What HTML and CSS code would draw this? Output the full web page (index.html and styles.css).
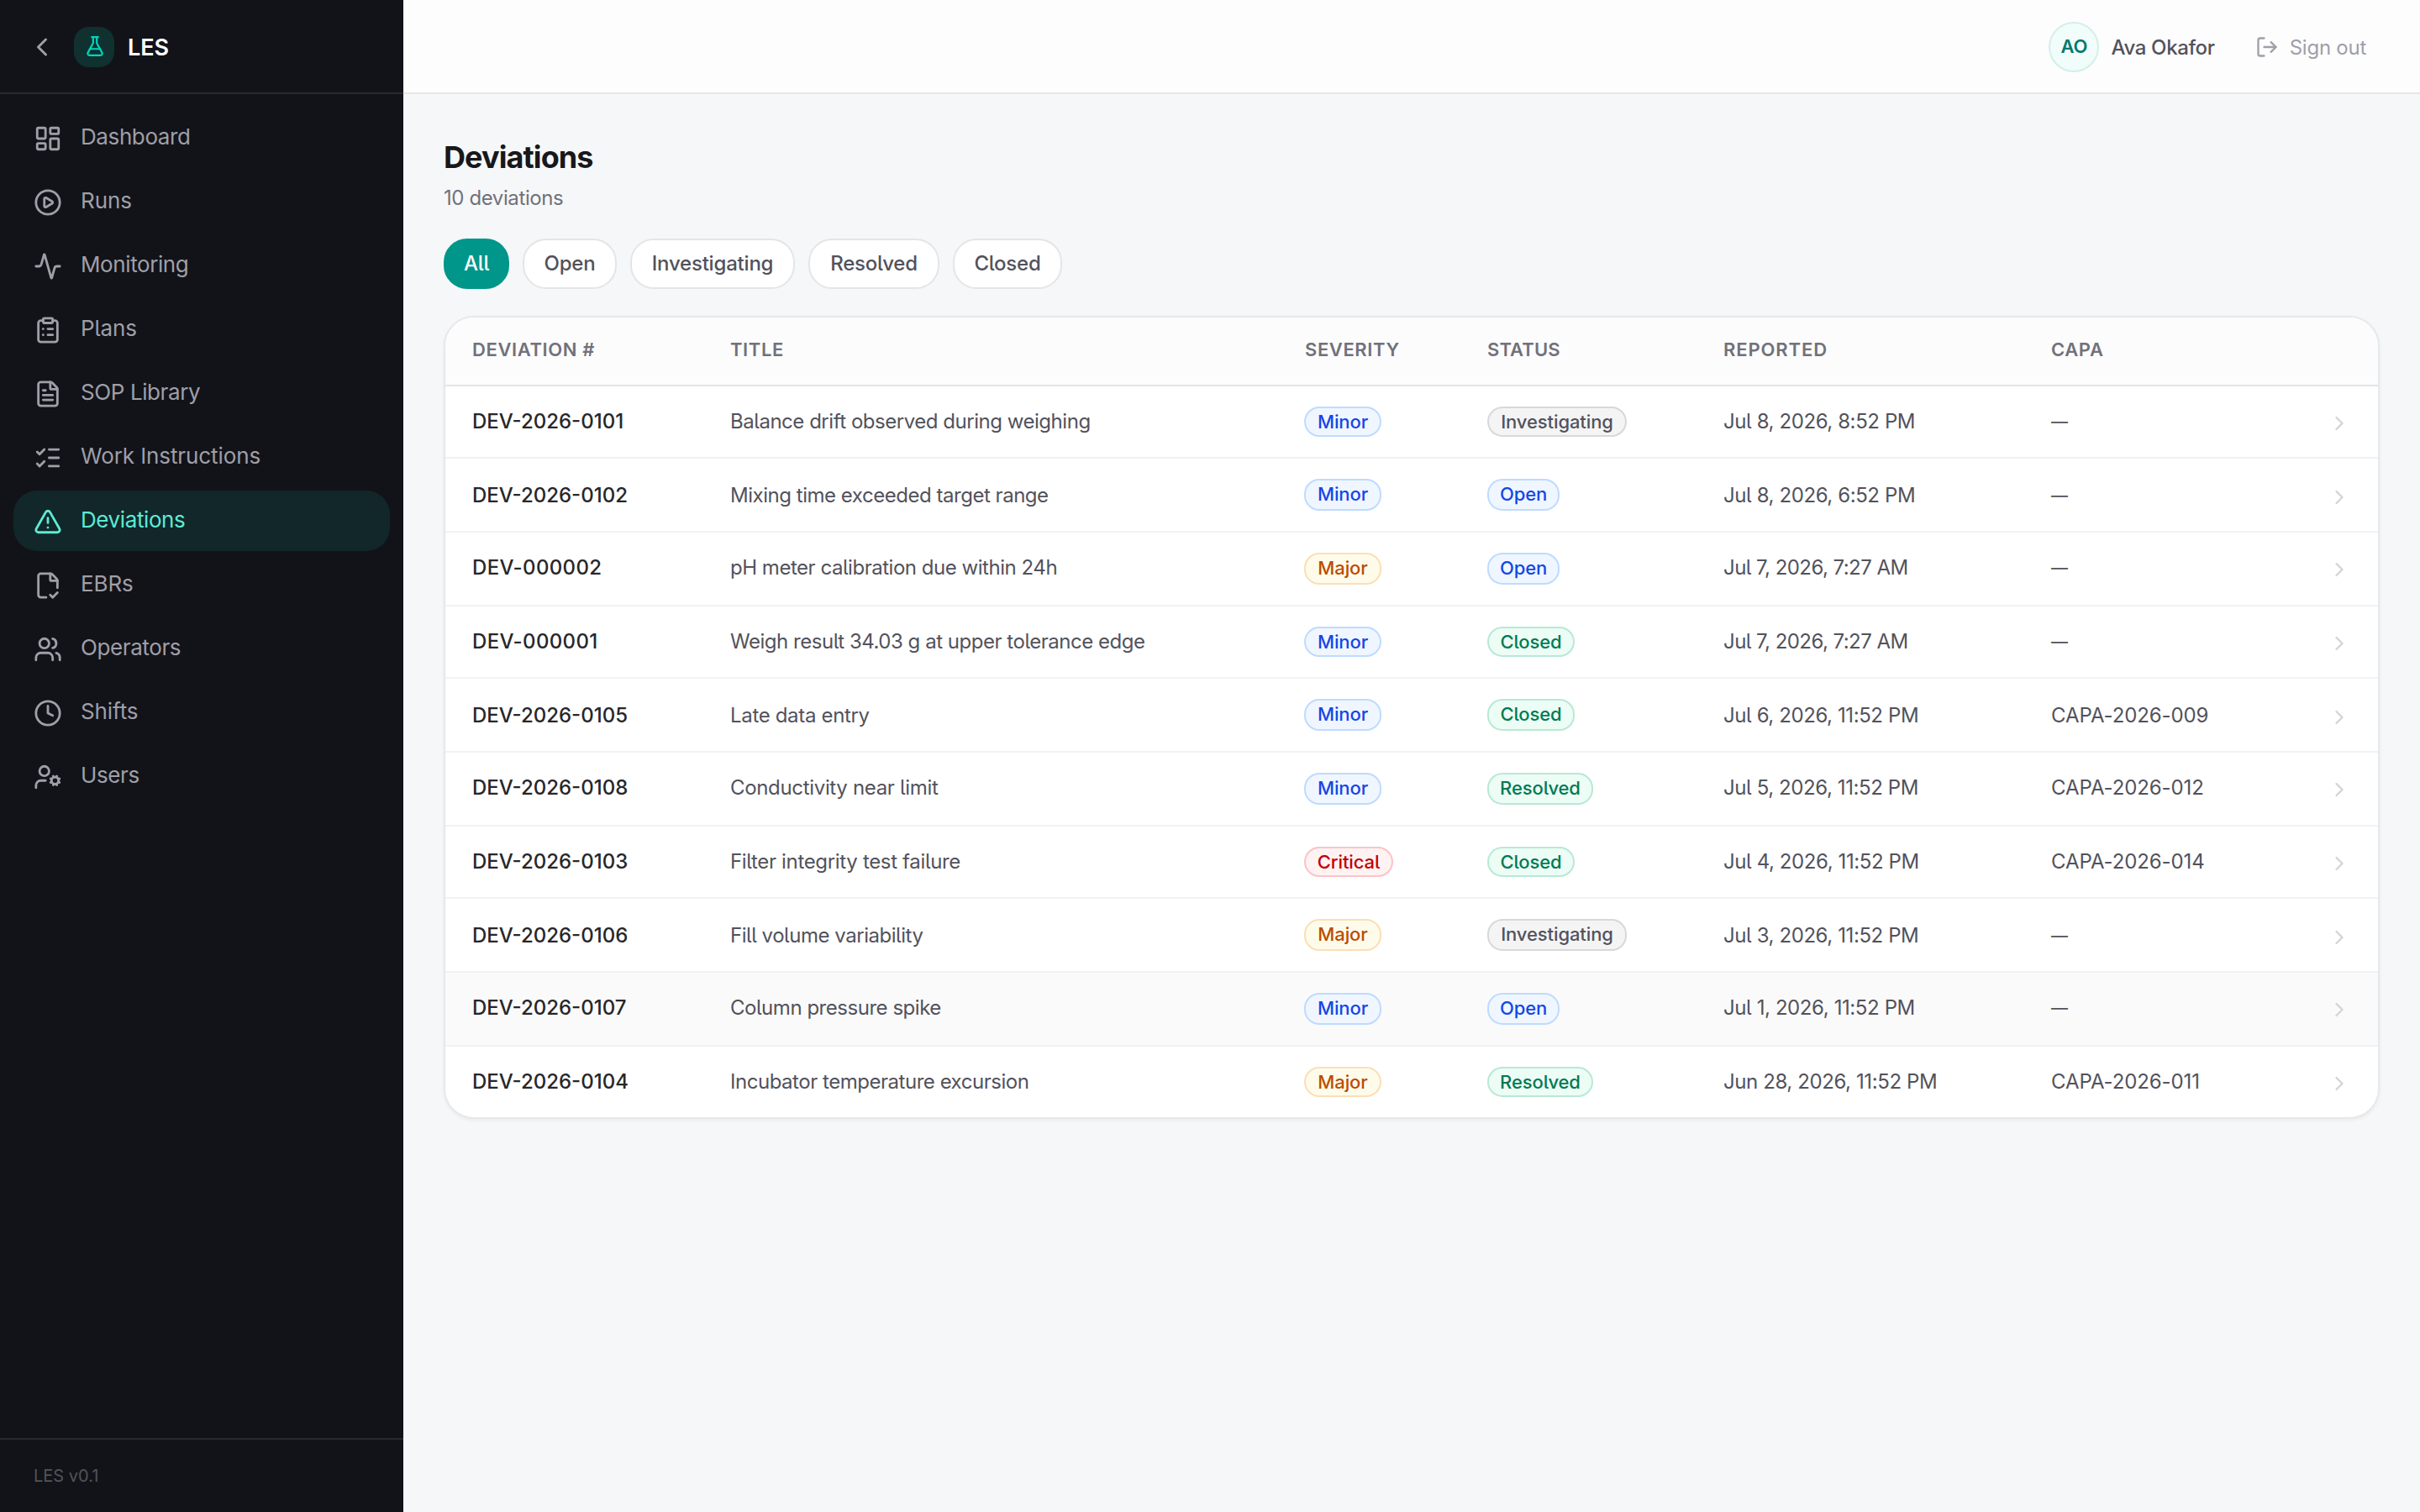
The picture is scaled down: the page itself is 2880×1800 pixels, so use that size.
FILE: index.html
```html
<!DOCTYPE html>
<html lang="en">
<head>
<meta charset="utf-8">
<title>Deviations</title>
<link rel="stylesheet" href="styles.css">
</head>
<body>
<svg width="0" height="0" class="sprite">
  <symbol id="chev" viewBox="0 0 24 24"><path d="m9 18 6-6-6-6"/></symbol>
</svg>
<div class="app">
  <aside class="sidebar">
    <div class="brand">
      <svg class="icon back" viewBox="0 0 24 24"><path d="m15 18-6-6 6-6"/></svg>
      <span class="logo"><svg class="icon" viewBox="0 0 24 24"><path d="M14 2v6a2 2 0 0 0 .245.96l5.51 10.08A2 2 0 0 1 18 22H6a2 2 0 0 1-1.755-2.96l5.51-10.08A2 2 0 0 0 10 8V2"/><path d="M6.453 15h11.094"/><path d="M8.5 2h7"/></svg></span>
      <span class="brand-name">LES</span>
    </div>
    <nav class="nav">
      <a class="nav-item"><svg class="icon" viewBox="0 0 24 24"><rect width="7" height="9" x="3" y="3" rx="1"/><rect width="7" height="5" x="14" y="3" rx="1"/><rect width="7" height="9" x="14" y="12" rx="1"/><rect width="7" height="5" x="3" y="16" rx="1"/></svg><span>Dashboard</span></a>
      <a class="nav-item"><svg class="icon" viewBox="0 0 24 24"><path d="M9 9.003a1 1 0 0 1 1.517-.859l4.997 2.997a1 1 0 0 1 0 1.718l-4.997 2.997A1 1 0 0 1 9 14.996z"/><circle cx="12" cy="12" r="10"/></svg><span class="loose">Runs</span></a>
      <a class="nav-item"><svg class="icon" viewBox="0 0 24 24"><path d="M22 12h-2.48a2 2 0 0 0-1.93 1.46l-2.35 8.36a.25.25 0 0 1-.48 0L9.24 2.18a.25.25 0 0 0-.48 0l-2.35 8.36A2 2 0 0 1 4.49 12H2"/></svg><span>Monitoring</span></a>
      <a class="nav-item"><svg class="icon" viewBox="0 0 24 24"><rect width="8" height="4" x="8" y="2" rx="1" ry="1"/><path d="M16 4h2a2 2 0 0 1 2 2v14a2 2 0 0 1-2 2H6a2 2 0 0 1-2-2V6a2 2 0 0 1 2-2h2"/><path d="M12 11h4"/><path d="M12 16h4"/><path d="M8 11h.01"/><path d="M8 16h.01"/></svg><span class="loose">Plans</span></a>
      <a class="nav-item"><svg class="icon" viewBox="0 0 24 24"><path d="M6 22a2 2 0 0 1-2-2V4a2 2 0 0 1 2-2h8a2.4 2.4 0 0 1 1.704.706l3.588 3.588A2.4 2.4 0 0 1 20 8v12a2 2 0 0 1-2 2z"/><path d="M14 2v5a1 1 0 0 0 1 1h5"/><path d="M10 9H8"/><path d="M16 13H8"/><path d="M16 17H8"/></svg><span>SOP Library</span></a>
      <a class="nav-item"><svg class="icon" viewBox="0 0 24 24"><path d="M13 5h8"/><path d="M13 12h8"/><path d="M13 19h8"/><path d="m3 17 2 2 4-4"/><path d="m3 7 2 2 4-4"/></svg><span class="loose">Work Instructions</span></a>
      <a class="nav-item active"><svg class="icon" viewBox="0 0 24 24"><path d="m21.73 18-8-14a2 2 0 0 0-3.48 0l-8 14A2 2 0 0 0 4 21h16a2 2 0 0 0 1.73-3"/><path d="M12 9v4"/><path d="M12 17h.01"/></svg><span>Deviations</span></a>
      <a class="nav-item"><svg class="icon" viewBox="0 0 24 24"><path d="M10.5 22H6a2 2 0 0 1-2-2V4a2 2 0 0 1 2-2h8a2.4 2.4 0 0 1 1.706.706l3.588 3.588A2.4 2.4 0 0 1 20 8v6"/><path d="M14 2v5a1 1 0 0 0 1 1h5"/><path d="m14 20 2 2 4-4"/></svg><span class="loose">EBRs</span></a>
      <a class="nav-item"><svg class="icon" viewBox="0 0 24 24"><path d="M16 21v-2a4 4 0 0 0-4-4H6a4 4 0 0 0-4 4v2"/><path d="M16 3.128a4 4 0 0 1 0 7.744"/><path d="M22 21v-2a4 4 0 0 0-3-3.87"/><circle cx="9" cy="7" r="4"/></svg><span>Operators</span></a>
      <a class="nav-item"><svg class="icon" viewBox="0 0 24 24"><circle cx="12" cy="12" r="10"/><path d="M12 6v6l4 2"/></svg><span class="loose">Shifts</span></a>
      <a class="nav-item"><svg class="icon" viewBox="0 0 24 24"><path d="M10 15H6a4 4 0 0 0-4 4v2"/><path d="m14.305 16.53.923-.382"/><path d="m15.228 13.852-.923-.383"/><path d="m16.852 12.228-.383-.923"/><path d="m16.852 17.772-.383.924"/><path d="m19.148 12.228.383-.923"/><path d="m19.53 18.696-.382-.924"/><path d="m20.772 13.852.924-.383"/><path d="m20.772 16.148.924.383"/><circle cx="18" cy="15" r="3"/><circle cx="9" cy="7" r="4"/></svg><span>Users</span></a>
    </nav>
    <div class="version"><span>LES v0.1</span></div>
  </aside>
  <div class="main">
    <header class="topbar">
      <span class="avatar">AO</span>
      <span class="user">Ava Okafor</span>
      <a class="signout"><svg class="icon" viewBox="0 0 24 24"><path d="m16 17 5-5-5-5"/><path d="M21 12H9"/><path d="M9 21H5a2 2 0 0 1-2-2V5a2 2 0 0 1 2-2h4"/></svg><span>Sign out</span></a>
    </header>
    <main class="content">
      <h1>Deviations</h1>
      <p class="sub">10 deviations</p>
      <div class="chips">
        <button class="chip on w-all">All</button><button class="chip w-open">Open</button><button class="chip w-inv">Investigating</button><button class="chip w-res">Resolved</button><button class="chip w-clo">Closed</button>
      </div>
      <section class="card">
        <div class="row head"><span>Deviation #</span><span>Title</span><span>Severity</span><span class="tight">Status</span><span class="wide">Reported</span><span>CAPA</span><span></span></div>
        <div class="body">
          <div class="row"><span class="id">DEV-2026-0101</span><span class="t">Balance drift observed during weighing</span><b class="badge minor">Minor</b><b class="badge investigating">Investigating</b><span class="d">Jul 8, 2026, 8:52 PM</span><span class="c none">—</span><svg class="icon"><use href="#chev"/></svg></div>
          <div class="row"><span class="id">DEV-2026-0102</span><span class="t">Mixing time exceeded target range</span><b class="badge minor">Minor</b><b class="badge open">Open</b><span class="d">Jul 8, 2026, 6:52 PM</span><span class="c none">—</span><svg class="icon"><use href="#chev"/></svg></div>
          <div class="row"><span class="id short">DEV-000002</span><span class="t">pH meter calibration due within 24h</span><b class="badge major">Major</b><b class="badge open">Open</b><span class="d am">Jul 7, 2026, 7:27 AM</span><span class="c none">—</span><svg class="icon"><use href="#chev"/></svg></div>
          <div class="row"><span class="id short">DEV-000001</span><span class="t">Weigh result 34.03 g at upper tolerance edge</span><b class="badge minor">Minor</b><b class="badge closed">Closed</b><span class="d am">Jul 7, 2026, 7:27 AM</span><span class="c none">—</span><svg class="icon"><use href="#chev"/></svg></div>
          <div class="row"><span class="id">DEV-2026-0105</span><span class="t roomy">Late data entry</span><b class="badge minor">Minor</b><b class="badge closed">Closed</b><span class="d">Jul 6, 2026, 11:52 PM</span><span class="c">CAPA-2026-009</span><svg class="icon"><use href="#chev"/></svg></div>
          <div class="row"><span class="id">DEV-2026-0108</span><span class="t roomy">Conductivity near limit</span><b class="badge minor">Minor</b><b class="badge resolved">Resolved</b><span class="d">Jul 5, 2026, 11:52 PM</span><span class="c">CAPA-2026-012</span><svg class="icon"><use href="#chev"/></svg></div>
          <div class="row"><span class="id">DEV-2026-0103</span><span class="t roomy">Filter integrity test failure</span><b class="badge critical">Critical</b><b class="badge closed">Closed</b><span class="d">Jul 4, 2026, 11:52 PM</span><span class="c">CAPA-2026-014</span><svg class="icon"><use href="#chev"/></svg></div>
          <div class="row"><span class="id">DEV-2026-0106</span><span class="t">Fill volume variability</span><b class="badge major">Major</b><b class="badge investigating">Investigating</b><span class="d">Jul 3, 2026, 11:52 PM</span><span class="c none">—</span><svg class="icon"><use href="#chev"/></svg></div>
          <div class="row hover"><span class="id">DEV-2026-0107</span><span class="t">Column pressure spike</span><b class="badge minor">Minor</b><b class="badge open">Open</b><span class="d">Jul 1, 2026, 11:52 PM</span><span class="c none">—</span><svg class="icon"><use href="#chev"/></svg></div>
          <div class="row"><span class="id">DEV-2026-0104</span><span class="t">Incubator temperature excursion</span><b class="badge major">Major</b><b class="badge resolved">Resolved</b><span class="d">Jun 28, 2026, 11:52 PM</span><span class="c">CAPA-2026-011</span><svg class="icon"><use href="#chev"/></svg></div>
        </div>
      </section>
    </main>
  </div>
</div>
</body>
</html>
```
FILE: styles.css
```css
* { box-sizing: border-box; }
body { margin: 0; font-family: Inter, "Liberation Sans", sans-serif; font-feature-settings: "cv05"; background: #f5f7f9; }
.sprite { display: none; }
.app { display: flex; height: 1800px; }
.icon { fill: none; stroke: currentColor; stroke-width: 2; stroke-linecap: round; stroke-linejoin: round; flex: none; display: block; }

.sidebar { width: 480px; flex: none; background: #121318; color: #9f9fa9; display: flex; flex-direction: column; }
.brand { height: 112px; border-bottom: 2px solid #292a2f; display: flex; align-items: center; padding: 2px 32px 0; }
.back { width: 36px; height: 36px; }
.logo { width: 48px; height: 48px; margin-left: 20px; border-radius: 18px; background: #10312f; color: #00d5be; display: flex; align-items: center; padding: 0 0 2px 12px; }
.logo .icon { width: 26px; height: 26px; }
.brand-name { margin-left: 16px; color: #fff; font-size: 27px; font-weight: 600; letter-spacing: -0.1px; }
.nav { flex: 1; padding: 16px; display: flex; flex-direction: column; gap: 4px; }
.nav-item { height: 72px; border-radius: 28px; padding: 0 24px; display: flex; align-items: center; gap: 22px; font-size: 26px; line-height: 36px; font-weight: 380; letter-spacing: -0.4px; }
.nav-item .icon { width: 34px; height: 34px; margin-top: 2px; }
.nav-item span { margin-top: -2px; }
.nav-item .loose { letter-spacing: -0.1px; }
.nav-item.active { background: #11272a; color: #5eead4; }
.version { height: 88px; border-top: 2px solid #292a2f; padding: 30px 40px; font-size: 20px; line-height: 26px; color: #52525b; }

.main { flex: 1; display: flex; flex-direction: column; }
.topbar { height: 112px; border-bottom: 2px solid #e6e7e9; background: #fdfdfd; display: flex; justify-content: flex-end; align-items: center; padding: 2px 64px 0 0; font-size: 24px; }
.avatar { width: 60px; height: 60px; padding-bottom: 2px; border-radius: 50%; border: 2px solid #d5eeea; background: #f0fdfa; color: #00786f; font-size: 22px; font-weight: 600; display: flex; align-items: center; justify-content: center; }
.user { margin-left: 14px; color: #52525c; font-weight: 500; letter-spacing: -0.35px; }
.signout { margin-left: 48px; color: #9f9fa9; display: flex; align-items: center; gap: 13px; letter-spacing: -0.25px; }
.signout .icon { width: 28px; height: 28px; }

.content { padding: 52px 48px 0; }
h1 { margin: 0; font-size: 36px; line-height: 46px; font-weight: 650; letter-spacing: -0.9px; color: #18181b; }
.sub { margin: 9px 0 0; font-size: 24px; line-height: 34px; letter-spacing: -0.4px; color: #71717b; }
.chips { display: flex; gap: 16px; margin-top: 31px; }
.chip { height: 60px; padding: 0; border: 2px solid #e4e5e6; border-radius: 28px; background: #fff; color: #52525c; font: 500 24px/1 Inter, sans-serif; font-feature-settings: "cv05"; letter-spacing: -0.2px; }
.chip.on { background: #009689; border-color: #009689; color: #fff; }
.w-all { width: 78px; } .w-open { width: 112px; } .w-inv { width: 196px; } .w-res { width: 156px; } .w-clo { width: 130px; }

.card { margin-top: 32px; border: 2px solid #e7e8ea; border-radius: 36px; background: #fff; overflow: hidden; box-shadow: 0 2px 4px rgba(0,0,0,.05); }
.row { display: grid; grid-template-columns: 306px 684px 218px 280px 390px 330px 28px; padding: 0 32px; height: 88px; border-bottom: 2px solid #f2f2f3; font-size: 24px; line-height: 34px; color: #52525c; }
.body .row > span { margin-top: 25px; }
.row .id { color: #27272a; font-weight: 500; }
.row .short { letter-spacing: 0.35px; }
.row .t { letter-spacing: -0.47px; padding-left: 1px; }
.row .roomy { letter-spacing: -0.33px; }
.row .d { letter-spacing: -0.4px; padding-left: 1px; }
.row .am { letter-spacing: -0.55px; }
.row .c { letter-spacing: -0.1px; padding-left: 1px; }
.row .none { font-size: 20px; }
.row > .icon { width: 28px; height: 28px; margin-top: 30px; color: #d4d4d8; }
.row.hover { background: #fafafa; }
.body .row:nth-child(3n+1) { height: 86px; }
.body .row:last-child { height: 84px; border: 0; }
.body .row:nth-child(3n+2) > span { margin-top: 27px; }
.body .row:nth-child(3n+2) > .icon { margin-top: 32px; }
.head { height: 82px; border-color: #e4e4e6; background: #fcfcfc; color: #71717b; font-size: 22px; font-weight: 600; text-transform: uppercase; letter-spacing: 0.6px; }
.head span { margin-top: 21px; padding-left: 1px; }
.head span:first-child { padding-left: 0; }
.head .wide { letter-spacing: 0.9px; }
.head .tight { letter-spacing: 0.1px; padding-left: 0; }
.badge { height: 38px; margin-top: 24px; border: 2px solid; border-radius: 18px; font-size: 22px; line-height: 32px; font-weight: 500; letter-spacing: -0.1px; text-align: center; white-space: nowrap; }
.row:nth-child(3n+1) .badge { height: 36px; }
.minor { width: 92px; } .major { width: 92px; } .critical { width: 106px; }
.investigating { width: 166px; } .open { width: 86px; } .closed { width: 104px; } .resolved { width: 126px; }
.minor, .open { color: #1447e6; background: #eff6ff; border-color: #bedbff; }
.major { color: #bb4d00; background: #fffbeb; border-color: #fbdfb5; }
.critical { color: #c10007; background: #fef2f2; border-color: #fbc3c5; }
.closed, .resolved { color: #007a55; background: #ecfdf5; border-color: #b9e8d6; }
.investigating { color: #52525c; background: #f4f4f5; border-color: #d8d8da; }
```
